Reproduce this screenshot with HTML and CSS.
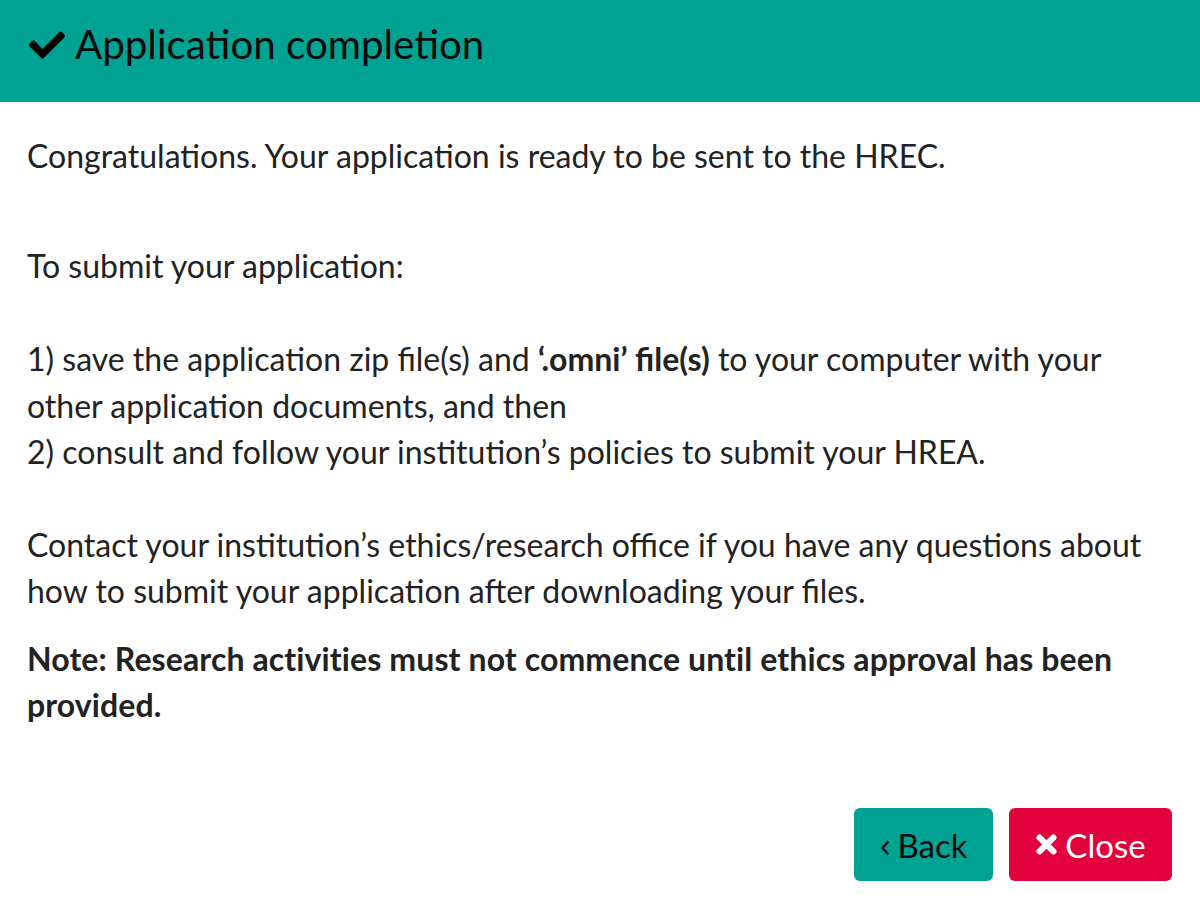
FILE: index.html
```html
<!DOCTYPE html>
<html lang="en">
<head>
<meta charset="utf-8">
<title>Application completion</title>
<link rel="stylesheet" href="styles.css">
</head>
<body>
<div class="modal">
  <header class="modal-header">
    <svg class="check" viewBox="0 0 512 512" width="36" height="36" aria-hidden="true"><path d="M173.9 439.4l-166.4-166.4c-10-10-10-26.2 0-36.2l36.2-36.2c10-10 26.2-10 36.2 0L192 312.7 432.1 72.6c10-10 26.2-10 36.2 0l36.2 36.2c10 10 10 26.2 0 36.2L210.1 439.4c-10 10-26.2 10-36.2 0z"/></svg>
    <h1 class="modal-title">Application completion</h1>
  </header>
  <div class="modal-body">
    <p class="p-first">Congratulations. Your application is ready to be sent to the HREC.</p>
    <p class="p-block">To submit your application:<br><br>1) save the application zip file(s) and <strong>‘.omni’ file(s)</strong> to your computer with your other application documents, and then<br>2) consult and follow your institution’s policies to submit your HREA.<br><br>Contact your institution’s ethics/research office if you have any questions about how to submit your application after downloading your files.</p>
    <p class="note"><strong>Note: Research activities must not commence until ethics approval has been provided.</strong></p>
  </div>
  <footer class="modal-footer">
    <button class="btn btn-back"><svg class="chev" viewBox="0 0 10 16" width="10" height="16" aria-hidden="true"><path d="M8.5 1.5 L2.5 8 L8.5 14.5" fill="none" stroke="currentColor" stroke-width="2.4"/></svg>Back</button>
    <button class="btn btn-close"><svg class="xicon" viewBox="0 0 20 20" width="23" height="23" aria-hidden="true"><path d="M4 4 L16 16 M16 4 L4 16" stroke="currentColor" stroke-width="5.4" stroke-linecap="round"/></svg>Close</button>
  </footer>
</div>
</body>
</html>
```
FILE: styles.css
```css
html, body {
  margin: 0;
  padding: 0;
  background: #ffffff;
}
body {
  font-family: Lato, "Open Sans", "Liberation Sans", sans-serif;
  color: #222222;
}
.modal {
  width: 1200px;
  height: 903px;
  display: flex;
  flex-direction: column;
}
.modal-header {
  background: #00a293;
  height: 102px;
  box-sizing: border-box;
  display: flex;
  align-items: center;
  padding: 0 0 13px 29px;
  gap: 10px;
}
.check {
  fill: #000;
  flex: none;
}
.modal-title {
  margin: 0;
  font-weight: 400;
  font-size: 40.3px;
  color: #0a0a0a;
  line-height: 1;
}
.modal-body {
  padding: 0 28px 0 27px;
  font-size: 32px;
  line-height: 46.4px;
}
.modal-body p {
  margin: 0;
}
.p-first {
  margin-top: 31px !important;
  margin-bottom: 64px !important;
}
.note {
  margin-top: 21px !important;
  letter-spacing: 0.11px;
}
.modal-body strong {
  font-weight: 700;
}
.modal-footer {
  margin-top: auto;
  display: flex;
  justify-content: flex-end;
  gap: 16px;
  padding: 0 28px 22px 0;
}
.btn {
  border: none;
  border-radius: 6px;
  height: 73px;
  font-family: Lato, "Open Sans", "Liberation Sans", sans-serif;
  font-size: 33px;
  display: flex;
  align-items: center;
  justify-content: center;
  gap: 7px;
  padding: 0;
}
.chev {
  margin-top: 6px;
  flex: none;
}
.btn-back {
  background: #00a293;
  color: #0a0a0a;
  width: 139px;
  gap: 8px;
}
.btn-close {
  background: #e2003d;
  color: #ffffff;
  width: 163px;
}
```
